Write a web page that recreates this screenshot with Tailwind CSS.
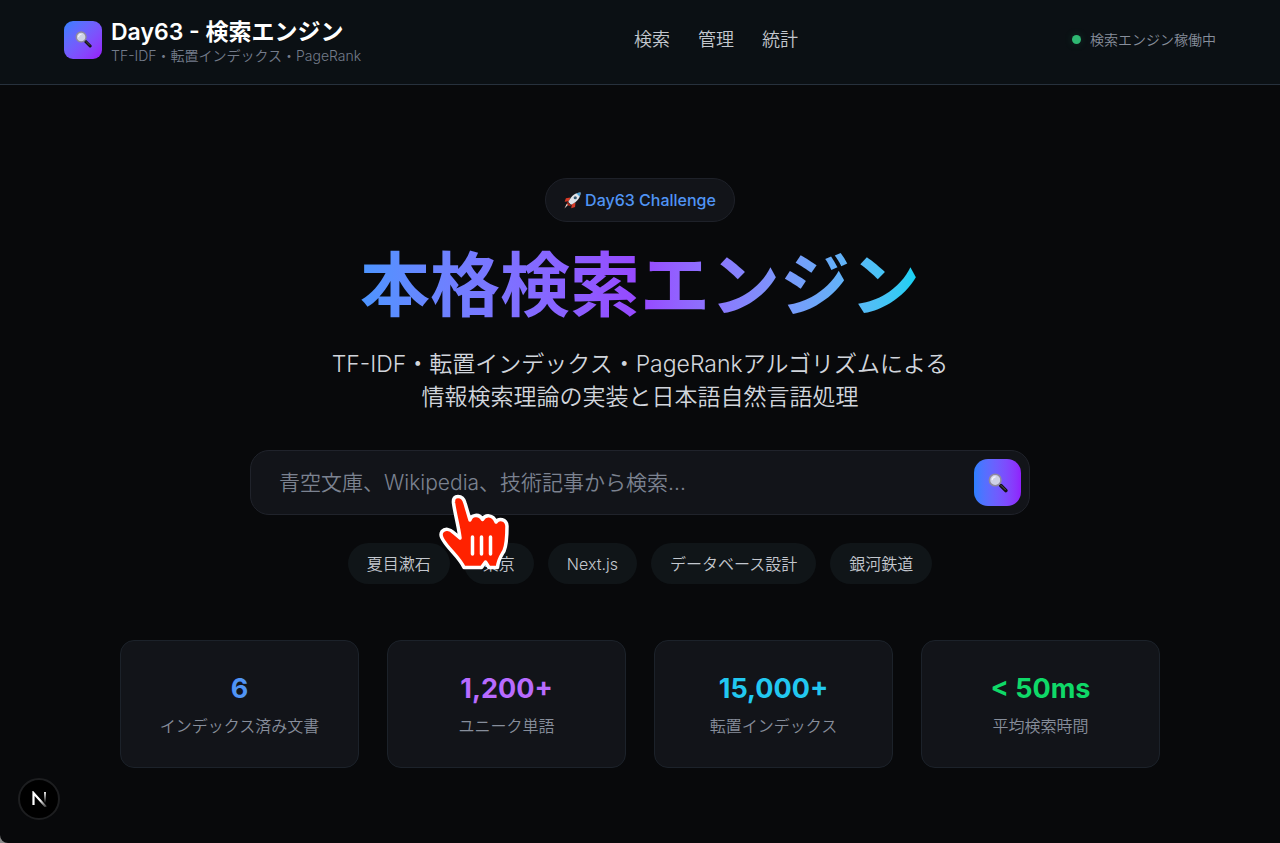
<!DOCTYPE html>
<html lang="ja" class="bg-[#8a8a8a]">

<head>
	<meta charset="utf-8" />
	<meta name="viewport" content="width=device-width, initial-scale=1.0" />
	<script src="https://cdn.jsdelivr.net/npm/@tailwindcss/browser@4"></script>
	<title>Day63 - 検索エンジン</title>
</head>

<body class="relative min-h-screen overflow-hidden rounded-bl-lg bg-[#08090b] font-['Inter','Noto_Sans_CJK_JP',sans-serif] text-white">
	<!-- アイコン定義 -->
	<svg class="hidden">
		<symbol id="icon-search" viewBox="0 0 20 20">
			<path d="M11.4 11.2l1.6 1.6" stroke="#8b8f96" stroke-width="2" />
			<path d="M12.8 12.6l5 5" stroke="#111" stroke-width="3.6" stroke-linecap="round" />
			<path d="M13 12.4l4.4 4.4" stroke="#5b5b5b" stroke-width="1" stroke-linecap="round" />
			<circle cx="7.2" cy="7" r="5.8" fill="#cfd2e6" stroke="#8f8a9c" stroke-width="1.6" />
			<path d="M4.2 6.6a3.4 3.4 0 0 1 3-2.8" fill="none" stroke="#f4f5fb" stroke-width="1.3" stroke-linecap="round" />
		</symbol>
		<symbol id="icon-rocket" viewBox="0 0 16 16">
			<path d="M6 5.2L1.8 5.8L.6 9.2L4.6 8.6z" fill="#d63a26" />
			<path d="M10.8 9.8L10.4 14L6.8 15.2L7.4 11.4z" fill="#d63a26" />
			<path d="M4.4 11.6L.4 15.6L2.6 11z" fill="#f0d9d0" />
			<path d="M15.6.4C11 .6 7 3 4 9.4L6.6 12C13 9 15.4 5 15.6.4z" fill="#dfe3e8" />
			<path d="M15.6.4C14.2.4 12.8.7 11.6 1.2L14.8 4.4C15.3 3.2 15.6 1.8 15.6.4z" fill="#4c9fd0" />
			<circle cx="10.6" cy="5.4" r="1.5" fill="#31566f" />
			<path d="M3.2 9.2L6.8 12.8L4.6 13.2L2.8 11.4z" fill="#a92a1c" />
		</symbol>
	</svg>

	<header class="border-b border-[#27313d] bg-[#0b1014] px-16">
		<div class="grid h-[84px] grid-cols-3 items-center pb-[5px]">
			<div class="flex items-center gap-[9px]">
				<div class="flex size-[38px] items-center justify-center rounded-[9px] bg-linear-to-br from-[#2b7fff] to-[#9810fa]">
					<svg class="size-[17px]"><use href="#icon-search" /></svg>
				</div>
				<div class="pt-1">
					<h1 class="text-[23px] leading-7 font-semibold whitespace-nowrap">Day63 - 検索エンジン</h1>
					<p class="text-sm font-[350] whitespace-nowrap text-[#747c8b]">TF-IDF・転置インデックス・PageRank</p>
				</div>
			</div>
			<nav class="flex justify-center gap-7 pl-[152px] text-lg font-[350] text-[#c3c7ce]">
				<a href="#search">検索</a>
				<a href="#admin">管理</a>
				<a href="#stats">統計</a>
			</nav>
			<div class="flex items-center justify-end gap-[9px] text-sm font-[350] text-[#878e9b]">
				<span class="size-[9px] rounded-full bg-[#2eb872] shadow-[0_0_8px_#2eb87233]"></span>
				<span>検索エンジン稼働中</span>
			</div>
		</div>
	</header>

	<main id="search" class="mx-auto max-w-[1040px] pt-[93px] text-center">
		<div class="inline-flex h-11 items-center gap-1 rounded-full border border-[#1e2129] bg-[#121419] px-[18px] font-medium text-[#5094f5]">
			<svg class="size-[17px]"><use href="#icon-rocket" /></svg>
			<span>Day63 Challenge</span>
		</div>
		<h2 class="mt-4 text-[70px] leading-[96px] font-bold"><span class="bg-linear-to-r from-[#4b95ff] via-[#9747ff] to-[#00d3f3] bg-clip-text text-transparent">本格検索エンジン</span></h2>
		<p class="mt-[14px] text-[23px] leading-[33px] font-[350] text-[#d1d5dc]">TF-IDF・転置インデックス・PageRankアルゴリズムによる<br>情報検索理論の実装と日本語自然言語処理</p>

		<form action="javascript:void(0);" class="mx-auto mt-9 flex h-[65px] max-w-[780px] items-center rounded-[19px] border border-[#20232b] bg-[#121419] pr-2 pl-7">
			<input type="text" aria-label="検索キーワード" placeholder="青空文庫、Wikipedia、技術記事から検索..." class="min-w-0 flex-1 bg-transparent text-[21px] font-[350] outline-none placeholder:text-[#7b8290]" />
			<button type="submit" aria-label="検索" class="flex size-[47px] items-center justify-center rounded-[14px] bg-linear-to-r from-[#2b7fff] to-[#9020fc]">
				<svg class="size-5"><use href="#icon-search" /></svg>
			</button>
		</form>

		<div class="mt-7 flex justify-center gap-[14px] font-[350] text-[#c3c7ce]">
			<button type="button" class="h-[41px] rounded-full bg-[#101518] px-[19px]">夏目漱石</button>
			<button type="button" class="h-[41px] rounded-full bg-[#101518] px-[19px]">東京</button>
			<button type="button" class="h-[41px] rounded-full bg-[#101518] px-[19px]">Next.js</button>
			<button type="button" class="h-[41px] rounded-full bg-[#101518] px-[19px]">データベース設計</button>
			<button type="button" class="h-[41px] rounded-full bg-[#101518] px-[19px]">銀河鉄道</button>
		</div>

		<div id="stats" class="mt-14 grid grid-cols-4 gap-7">
			<div class="h-32 rounded-[14px] border border-[#1c222a] bg-[#121419] pt-[29px]">
				<div class="text-[27px] leading-[38px] font-bold text-[#5094f5]">6</div>
				<div class="mt-[6px] font-[350] text-[#878e9b]">インデックス済み文書</div>
			</div>
			<div class="h-32 rounded-[14px] border border-[#1c222a] bg-[#121419] pt-[29px]">
				<div class="text-[27px] leading-[38px] font-bold text-[#b86bff]">1,200+</div>
				<div class="mt-[6px] font-[350] text-[#878e9b]">ユニーク単語</div>
			</div>
			<div class="h-32 rounded-[14px] border border-[#1c222a] bg-[#121419] pt-[29px]">
				<div class="text-[27px] leading-[38px] font-bold text-[#22c8f0]">15,000+</div>
				<div class="mt-[6px] font-[350] text-[#878e9b]">転置インデックス</div>
			</div>
			<div class="h-32 rounded-[14px] border border-[#1c222a] bg-[#121419] pt-[29px]">
				<div class="text-[27px] leading-[38px] font-bold text-[#0fd968]">&lt; 50ms</div>
				<div class="mt-[6px] font-[350] text-[#878e9b]">平均検索時間</div>
			</div>
		</div>
	</main>

	<!-- ポインター -->
	<svg class="absolute top-[493px] left-1/2 -ml-[202px] h-[78px] w-[72px]" viewBox="0 0 72 78">
		<path d="M26 74.5C22 66 15 60 9 52.5C4 46 1.500 42 4 38.500C7 35 12 36 15.500 39.500L22 45C20.500 33 17 21 15.500 10C15 5 17 3.500 20 3.500C23.500 3.500 26 6 27 10L32 27C33 22 41 20 44.500 26.500C47 21.500 55 21 58 29C60.500 25 68.500 25.500 69 33C69 42 69 51 66 58C62.500 64 60 67 59.500 74.500L51 74.500L47.500 69L43.500 74.500Z" fill="#ff2200" stroke="#fff" stroke-width="3.5" stroke-linejoin="round" />
		<path d="M34.500 44v17M43.500 44v17M52.500 44v17" stroke="#fff" stroke-width="3.5" stroke-linecap="round" />
	</svg>

	<button type="button" aria-label="Next.js" class="fixed bottom-[23px] left-[18px] flex size-[42px] items-center justify-center rounded-full border-2 border-[#1d1e20] bg-black">
		<svg class="h-4 w-[15px]" viewBox="0 0 15 16" fill="none">
			<defs>
				<linearGradient id="n-bar" x1="0" y1="0" x2="0" y2="16" gradientUnits="userSpaceOnUse">
					<stop stop-color="#fff" />
					<stop offset=".75" stop-color="#fff" stop-opacity="0" />
				</linearGradient>
				<linearGradient id="n-diag" x1="8" y1="9" x2="14" y2="16" gradientUnits="userSpaceOnUse">
					<stop stop-color="#fff" />
					<stop offset="1" stop-color="#fff" stop-opacity=".2" />
				</linearGradient>
			</defs>
			<path d="M1.500 14V2L14 16" stroke="url(#n-diag)" stroke-width="2.200" />
			<path d="M13 1v12" stroke="url(#n-bar)" stroke-width="2" />
		</svg>
	</button>
</body>

</html>
